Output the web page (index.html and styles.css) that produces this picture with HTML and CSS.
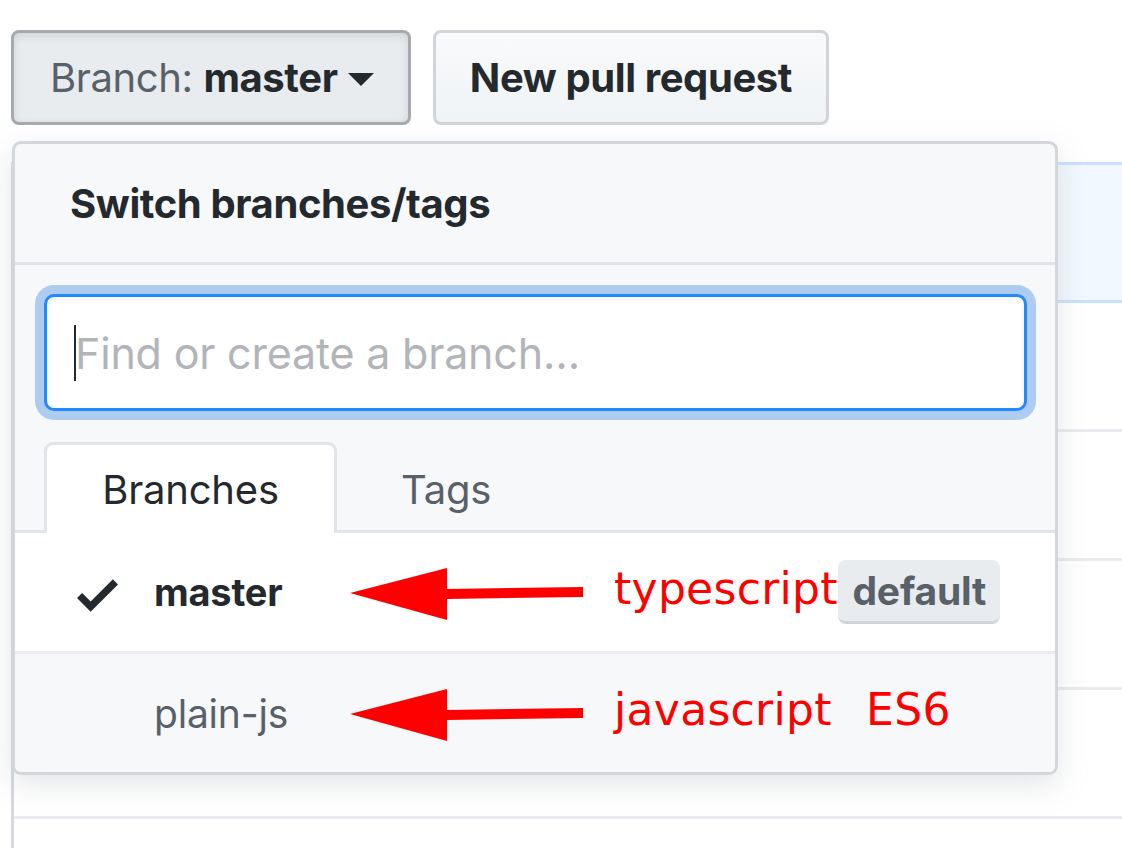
FILE: index.html
```html
<!DOCTYPE html>
<html>
<head>
<meta charset="utf-8">
<link rel="stylesheet" href="styles.css">
</head>
<body>
<div class="page">
  <div class="toolbar">
    <div class="btn btn-branch"><span class="lbl">Branch:</span>&nbsp;<span class="cur">master</span><span class="caret"></span></div>
    <div class="btn btn-pr">New pull request</div>
  </div>

  <div class="files">
    <div class="files-head"></div>
    <div class="files-row"></div>
    <div class="files-row"></div>
    <div class="files-row"></div>
    <div class="files-row"></div>
  </div>

  <div class="menu">
    <div class="menu-header">Switch branches/tags</div>
    <div class="menu-filter">
      <div class="search"><span class="cursor"></span><span class="placeholder">Find or create a branch…</span></div>
      <div class="tabs">
        <div class="tab active">Branches</div>
        <div class="tab">Tags</div>
      </div>
    </div>
    <div class="menu-list">
      <div class="item selected">
        <svg class="check" viewBox="0 3.5 12 9.5" width="41" height="33"><path d="M12 5l-8 8-4-4 1.5-1.5L4 10l6.5-6.5L12 5z" fill="#24292e"/></svg>
        <span class="name">master</span>
        <svg class="arrow" viewBox="0 0 233 52" width="233" height="52"><polygon points="0,25 97,0 97,21 233,19 233,29 97,31 97,52" fill="#ff0000"/></svg>
        <span class="note">typescript</span>
        <span class="badge">default</span>
      </div>
      <div class="item">
        <span class="nocheck"></span>
        <span class="name">plain-js</span>
        <svg class="arrow" viewBox="0 0 233 52" width="233" height="52"><polygon points="0,25 97,0 97,21 233,19 233,29 97,31 97,52" fill="#ff0000"/></svg>
        <span class="note">javascript ES6</span>
      </div>
    </div>
  </div>
</div>
</body>
</html>
```

FILE: styles.css
```css
html, body {
  margin: 0;
  padding: 0;
  background: #ffffff;
}
body {
  font-family: Inter, "Liberation Sans", sans-serif;
  color: #24292e;
  width: 1122px;
  height: 848px;
  overflow: hidden;
}
.page {
  position: relative;
  padding-top: 30px;
  padding-left: 11px;
}
.toolbar {
  display: flex;
  gap: 22px;
}
.btn {
  box-sizing: border-box;
  height: 95px;
  border-radius: 8px;
  display: flex;
  align-items: center;
  font-size: 40px;
  letter-spacing: -0.4px;
}
.btn-branch {
  width: 400px;
  background: #e9ecef;
  border: 3px solid #a6aaae;
  box-shadow: inset 0 3px 8px rgba(27,31,35,0.12);
  padding-left: 36px;
}
.btn-branch .lbl { color: #586069; }
.btn-branch .cur { font-weight: 700; color: #24292e; }
.caret {
  width: 0;
  height: 0;
  border-left: 13px solid transparent;
  border-right: 13px solid transparent;
  border-top: 13px solid #24292e;
  margin-left: 10px;
  margin-top: 4px;
}
.btn-pr {
  width: 396px;
  background: linear-gradient(#f9fafb, #eff3f6);
  border: 3px solid #d1d5da;
  justify-content: center;
  font-weight: 700;
}

.files {
  margin-top: 37px;
  border-left: 3px solid #d6d9dd;
  height: 700px;
}
.files-head {
  height: 135px;
  background: #f1f8ff;
  border-top: 3px solid #c8e1ff;
  border-bottom: 3px solid #c8e1ff;
}
.files-row {
  height: 126px;
  border-bottom: 3px solid #eaecef;
}

.menu {
  position: absolute;
  left: 12px;
  top: 141px;
  width: 1046px;
  box-sizing: border-box;
  border: 3px solid #d3d6da;
  border-radius: 9px;
  background: #f6f8fa;
  box-shadow: 0 10px 30px rgba(149,157,165,0.25);
  overflow: hidden;
}
.menu-header {
  height: 118px;
  display: flex;
  align-items: center;
  padding-left: 55px;
  font-size: 40px;
  font-weight: 700;
  letter-spacing: -0.4px;
  border-bottom: 3px solid #e1e4e8;
}
.menu-filter {
  padding: 29px 28px 0 29px;
  border-bottom: 3px solid #e1e4e8;
}
.search {
  box-sizing: border-box;
  height: 117px;
  background: #ffffff;
  border: 3px solid #2188ff;
  border-radius: 10px;
  box-shadow: 0 0 0 9px rgba(3,102,214,0.3), inset 0 2px 4px rgba(27,31,35,0.06);
  display: flex;
  align-items: center;
  padding-left: 27px;
  font-size: 43px;
  letter-spacing: -0.2px;
}
.cursor {
  width: 2px;
  height: 56px;
  background: #24292e;
  margin-right: -1px;
}
.placeholder {
  color: #b1b5ba;
}
.tabs {
  display: flex;
  margin-top: 31px;
  margin-bottom: -3px;
  align-items: flex-end;
}
.tab {
  box-sizing: border-box;
  height: 91px;
  display: flex;
  align-items: center;
  font-size: 40px;
  letter-spacing: -0.2px;
  color: #586069;
  padding: 0 58px 0 61px;
  border: 3px solid transparent;
  border-bottom: none;
}
.tab.active {
  width: 293px;
  padding: 0;
  justify-content: center;
  color: #24292e;
  background: #ffffff;
  border-color: #e1e4e8;
  border-radius: 9px 9px 0 0;
}

.item {
  height: 118px;
  display: flex;
  align-items: center;
  padding-left: 62px;
  padding-right: 55px;
  font-size: 39px;
  color: #586069;
  background: #f6f8fa;
}
.item.selected {
  background: #ffffff;
  color: #24292e;
  border-bottom: 3px solid #eaecef;
}
.item.selected .name { font-weight: 700; font-size: 38px; }
.check {
  width: 41px;
  flex: none;
  margin-top: 6px;
}
.nocheck {
  width: 41px;
  flex: none;
}
.name {
  width: 196px;
  margin-left: 36px;
  flex: none;
  letter-spacing: -0.2px;
}
.arrow {
  flex: none;
  margin-top: 4px;
}
.note {
  margin-left: 31px;
  margin-bottom: 8px;
  color: #ff0000;
  font-family: "DejaVu Sans", "Noto Sans", sans-serif;
  font-size: 44px;
  letter-spacing: 0.3px;
  word-spacing: 20px;
  white-space: nowrap;
}
.badge {
  flex: none;
  margin-left: auto;
  box-sizing: border-box;
  height: 64px;
  padding: 0 14px;
  display: flex;
  align-items: center;
  background: #e9ecef;
  border-radius: 8px;
  border-bottom: 3px solid #d1d5da;
  color: #586069;
  font-weight: 700;
  font-size: 39px;
  letter-spacing: -0.2px;
}
```
